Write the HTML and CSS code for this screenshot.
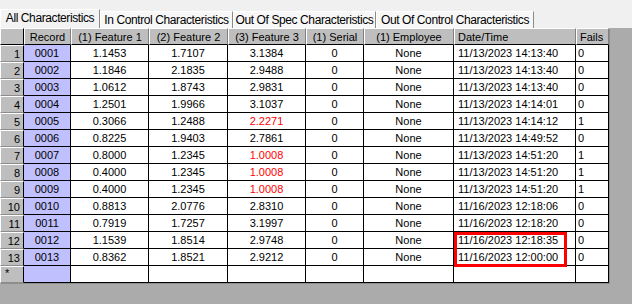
FILE: index.html
```html
<!DOCTYPE html>
<html lang="en">
<head>
    <meta charset="UTF-8">
    <title>Characteristics</title>
    <link rel="stylesheet" href="styles.css">
</head>
<body>
    <div id="tabs">
        <div class="tab active" style="width: 100px">All Characteristics</div>
        <div class="tab" style="width: 133px">In Control Characteristics</div>
        <div class="tab" style="width: 143px">Out Of Spec Characteristics</div>
        <div class="tab" style="width: 158px">Out Of Control Characteristics</div>
    </div>
    <div id="workspace">
        <div id="grid">
            <div class="hd corner"></div>
            <div class="hd">Record</div>
            <div class="hd">(1) Feature 1</div>
            <div class="hd">(2) Feature 2</div>
            <div class="hd">(3) Feature 3</div>
            <div class="hd">(1) Serial</div>
            <div class="hd">(1) Employee</div>
            <div class="hd left">Date/Time</div>
            <div class="hd left">Fails</div>

            <div class="rh">1</div><div class="rec">0001</div><div class="c">1.1453</div><div class="c">1.7107</div><div class="c">3.1384</div><div class="c">0</div><div class="c">None</div><div class="c date">11/13/2023 14:13:40</div><div class="c left">0</div>
            <div class="rh">2</div><div class="rec">0002</div><div class="c">1.1846</div><div class="c">2.1835</div><div class="c">2.9488</div><div class="c">0</div><div class="c">None</div><div class="c date">11/13/2023 14:13:40</div><div class="c left">0</div>
            <div class="rh">3</div><div class="rec">0003</div><div class="c">1.0612</div><div class="c">1.8743</div><div class="c">2.9831</div><div class="c">0</div><div class="c">None</div><div class="c date">11/13/2023 14:13:40</div><div class="c left">0</div>
            <div class="rh">4</div><div class="rec">0004</div><div class="c">1.2501</div><div class="c">1.9966</div><div class="c">3.1037</div><div class="c">0</div><div class="c">None</div><div class="c date">11/13/2023 14:14:01</div><div class="c left">0</div>
            <div class="rh">5</div><div class="rec">0005</div><div class="c">0.3066</div><div class="c">1.2488</div><div class="c red">2.2271</div><div class="c">0</div><div class="c">None</div><div class="c date">11/13/2023 14:14:12</div><div class="c left">1</div>
            <div class="rh">6</div><div class="rec">0006</div><div class="c">0.8225</div><div class="c">1.9403</div><div class="c">2.7861</div><div class="c">0</div><div class="c">None</div><div class="c date">11/13/2023 14:49:52</div><div class="c left">0</div>
            <div class="rh">7</div><div class="rec">0007</div><div class="c">0.8000</div><div class="c">1.2345</div><div class="c red">1.0008</div><div class="c">0</div><div class="c">None</div><div class="c date">11/13/2023 14:51:20</div><div class="c left">1</div>
            <div class="rh">8</div><div class="rec">0008</div><div class="c">0.4000</div><div class="c">1.2345</div><div class="c red">1.0008</div><div class="c">0</div><div class="c">None</div><div class="c date">11/13/2023 14:51:20</div><div class="c left">1</div>
            <div class="rh">9</div><div class="rec">0009</div><div class="c">0.4000</div><div class="c">1.2345</div><div class="c red">1.0008</div><div class="c">0</div><div class="c">None</div><div class="c date">11/13/2023 14:51:20</div><div class="c left">1</div>
            <div class="rh">10</div><div class="rec">0010</div><div class="c">0.8813</div><div class="c">2.0776</div><div class="c">2.8310</div><div class="c">0</div><div class="c">None</div><div class="c date">11/16/2023 12:18:06</div><div class="c left">0</div>
            <div class="rh">11</div><div class="rec">0011</div><div class="c">0.7919</div><div class="c">1.7257</div><div class="c">3.1997</div><div class="c">0</div><div class="c">None</div><div class="c date">11/16/2023 12:18:20</div><div class="c left">0</div>
            <div class="rh">12</div><div class="rec">0012</div><div class="c">1.1539</div><div class="c">1.8514</div><div class="c">2.9748</div><div class="c">0</div><div class="c">None</div><div class="c date">11/16/2023 12:18:35</div><div class="c left">0</div>
            <div class="rh">13</div><div class="rec">0013</div><div class="c">0.8362</div><div class="c">1.8521</div><div class="c">2.9212</div><div class="c">0</div><div class="c">None</div><div class="c date">11/16/2023 12:00:00</div><div class="c left">0</div>
            <div class="rh new">*</div><div class="rec"></div><div class="c"></div><div class="c"></div><div class="c"></div><div class="c"></div><div class="c"></div><div class="c"></div><div class="c"></div>

            <div id="highlight"></div>
        </div>
    </div>
</body>
</html>
```

FILE: styles.css
```css
*{
    margin: 0;
    padding: 0;
    box-sizing: border-box;
}
body{
    width: 632px;
    height: 304px;
    overflow: hidden;
    background: #f0f0f0;
    font-family: "Liberation Sans", Arial, sans-serif;
    font-size: 11px;
    color: #000;
}
#tabs{
    height: 28px;
    display: flex;
    align-items: flex-end;
}
.tab{
    height: 17px;
    line-height: 16px;
    font-size: 12px;
    letter-spacing: -0.4px;
    text-align: center;
    background: #f7f7f7;
    border: 1px solid #d9d9d9;
    border-bottom: none;
    border-left-color: #fff;
    border-top-color: #fff;
    border-right: 1px solid #8a8a8a;
    white-space: nowrap;
    overflow: hidden;
}
.tab.active{
    height: 19px;
    line-height: 16px;
    background: #f3f3f3;
}
#workspace{
    height: 276px;
    background: #ababab;
}
#grid{
    position: relative;
    width: 609px;
    display: grid;
    grid-template-columns: 24px 47px 78px 79px 78px 58px 90px 122px 33px;
    grid-auto-rows: 17px;
    box-shadow: 1px 1px 0 #8e8e8e;
}
#grid > div{
    line-height: 16px;
    white-space: nowrap;
    overflow: hidden;
}
.hd{
    background: #bebebe;
    border-top: 1px solid #fff;
    border-left: 1px solid #fff;
    border-right: 1px solid #808080;
    border-bottom: 1px solid #000;
    text-align: center;
}
.hd.corner{
    border-right-color: #000;
}
.hd.left{
    text-align: left;
    padding-left: 3px;
}
.rh{
    background: #bebebe;
    border-top: 1px solid #fff;
    border-left: 1px solid #fff;
    border-right: 1px solid #000;
    border-bottom: 1px solid #8c8c8c;
    text-align: right;
    padding-right: 3px;
}
.rh.new{
    text-align: left;
    padding-left: 4px;
    line-height: 12px !important;
}
.rec{
    background: #c0c0ff;
    border-right: 1px solid #000;
    border-bottom: 1px solid #000;
    text-align: center;
}
.c{
    background: #fff;
    border-right: 1px solid #000;
    border-bottom: 1px solid #000;
    text-align: center;
}
.c.left{
    text-align: left;
    padding-left: 2px;
}
.c.date{
    text-align: left;
    padding-left: 4px;
}
.red{
    color: #ff0000;
}
#highlight{
    position: absolute;
    left: 454px;
    top: 204px;
    width: 113px;
    height: 35px;
    border: 3px solid #ff0000;
}
```
